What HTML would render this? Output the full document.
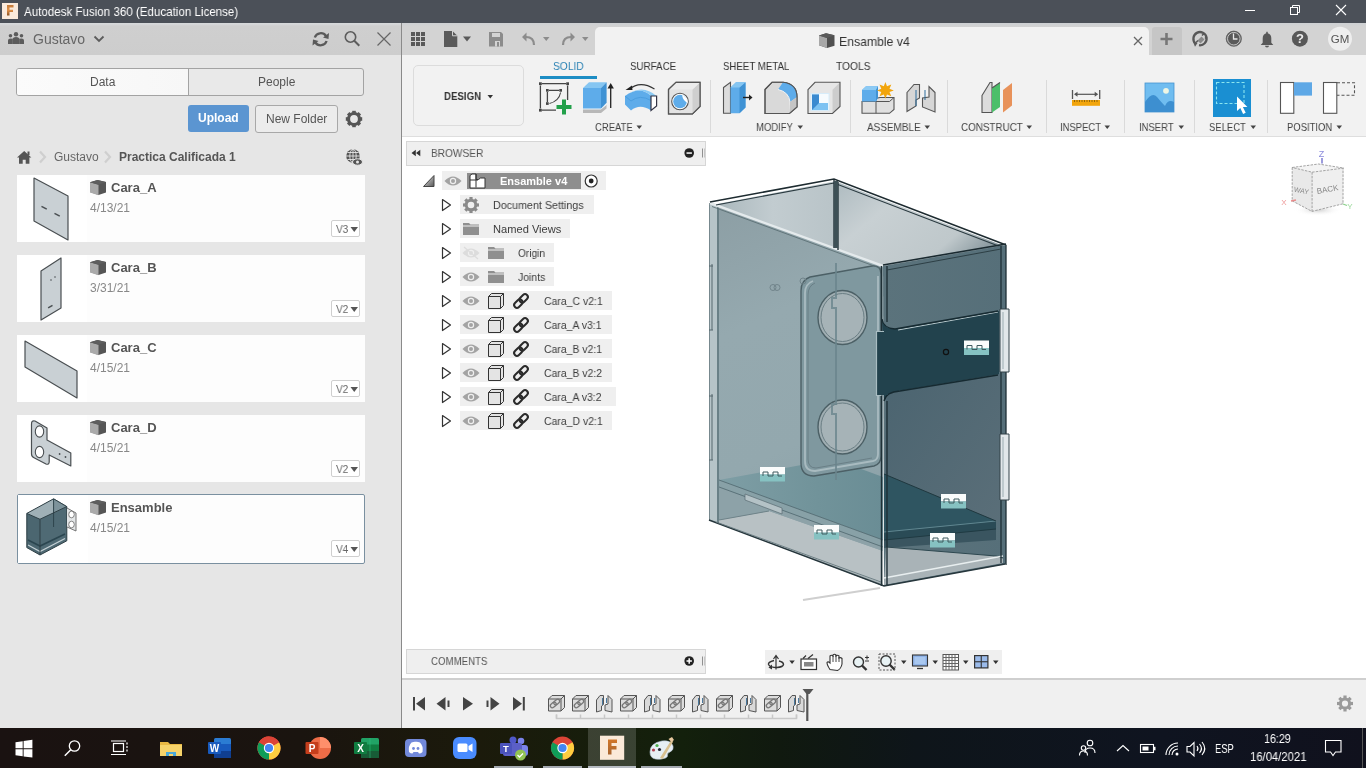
<!DOCTYPE html>
<html><head><meta charset="utf-8">
<style>
*{margin:0;padding:0;box-sizing:border-box}
html,body{width:1366px;height:768px;overflow:hidden;background:#f0f0f0;font-family:"Liberation Sans",sans-serif;position:relative}
.a{position:absolute}
.t{position:absolute;white-space:nowrap;line-height:1;transform-origin:0 0;will-change:transform}
svg{position:absolute;overflow:visible}
#title{left:0;top:0;width:1366px;height:23px;background:#4b5058}
#lp{left:0;top:23px;width:401px;height:705px;background:#e6e6e6}
#lph{left:0;top:23px;width:401px;height:32px;background:linear-gradient(#d6d8da 0,#d6d8da 1px,#cfcfcf 3px,#cdcdcd 100%)}
#div{left:401px;top:23px;width:1px;height:705px;background:#8a8a8a}
#tabbar{left:402px;top:23px;width:964px;height:32px;background:linear-gradient(#cdd0d3 0,#d3d3d3 4px,#d3d3d3)}
#tab{left:595px;top:27px;width:554px;height:28px;background:#f2f2f2;border-radius:5px 5px 0 0}
#plusbg{left:1152px;top:27px;width:30px;height:28px;background:#c6c6c6;border-radius:3px 3px 0 0}
#tb{left:402px;top:55px;width:964px;height:82px;background:#f2f2f2;border-bottom:1px solid #dedede}
#vp{left:402px;top:137px;width:964px;height:542px;background:#fff}
#tl{left:402px;top:678px;width:964px;height:50px;background:#f0f0f0;border-top:2px solid #cfcfcf}
#task{left:0;top:728px;width:1366px;height:40px;background:linear-gradient(90deg,#1a1211 0,#1a140f 22%,#1b1a0b 35%,#13200c 50%,#10190f 57%,#0e151a 67%,#0f1420 85%,#10111d 100%)}
.card{position:absolute;left:17px;width:348px;height:67px;background:#fdfdfd}
.cname{font-size:13px;font-weight:bold;color:#555}
.cdate{font-size:12px;color:#888}
.ver{position:absolute;left:331px;width:29px;height:17px;border:1px solid #cfcfcf;background:#fff;border-radius:2px}
.tbl{font-size:11px;color:#444;transform:scaleX(.86)}
.sep{position:absolute;top:80px;width:1px;height:53px;background:#dadada}
.row{position:absolute;height:19px;background:#efefef}
.tl{font-size:11px;color:#3c3c3c}
</style></head><body>
<!-- title bar -->
<div id="title" class="a"></div>
<div class="a" style="left:2px;top:3px;width:16px;height:16px;background:#fbeadb"></div>
<svg style="left:0;top:0" width="24" height="23"><defs><linearGradient id="tfg" x1="0" y1="0" x2="0" y2="1"><stop offset="0" stop-color="#c47a3a"/><stop offset=".5" stop-color="#e09048"/><stop offset="1" stop-color="#8a5020"/></linearGradient></defs><path d="M7 5h6.5v2.5H9.5v2.2h3.5v2.3H9.5v3.6H7z" fill="url(#tfg)"/></svg>
<div class="t" style="left:24px;top:5px;font-size:13px;color:#fff;transform:scaleX(.89)">Autodesk Fusion 360 (Education License)</div>
<svg style="left:0;top:0" width="1366" height="23">
 <line x1="1245" y1="10.5" x2="1255" y2="10.5" stroke="#fff" stroke-width="1"/>
 <rect x="1290.5" y="7.5" width="7" height="7" fill="none" stroke="#fff"/>
 <path d="M1292.5 7.5V5.5h7v7h-2" fill="none" stroke="#fff"/>
 <path d="M1336 5L1346 15M1346 5L1336 15" stroke="#fff" stroke-width="1.1"/>
</svg>

<!-- left panel -->
<div id="lp" class="a"></div>
<div id="lph" class="a"></div>
<div id="div" class="a"></div>

<!-- left header -->
<svg style="left:0;top:23px" width="401" height="31">
 <g fill="#5c5c5c">
  <circle cx="16" cy="11.2" r="2.2"/><circle cx="10.5" cy="12.8" r="1.8"/><circle cx="21.5" cy="12.8" r="1.8"/>
  <path d="M12.5 21v-4.5q0-2.5 3.5-2.5t3.5 2.5V21z"/>
  <path d="M8 21v-3.5q0-2 2.5-2t2.2 .3V21z"/><path d="M24 21v-3.5q0-2-2.5-2t-2.2 .3V21z"/>
 </g>
 <path d="M94.5 13.5l4.5 4.5l4.5-4.5" fill="none" stroke="#5c5c5c" stroke-width="1.8"/>
 <path d="M314.8 14.5A6.3 6.3 0 0 1 326 13" fill="none" stroke="#5a5a5a" stroke-width="2.3"/>
 <path d="M326.6 18A6.3 6.3 0 0 1 315.4 19.5" fill="none" stroke="#5a5a5a" stroke-width="2.3"/>
 <path d="M323 14.5l5.5 1.5l.5-6z M318.5 18l-5.5-1.5l-.5 6z" fill="#5a5a5a"/>
 <circle cx="350.5" cy="14" r="5.2" fill="none" stroke="#5c5c5c" stroke-width="1.6"/>
 <path d="M354.3 17.8l5 5" stroke="#5c5c5c" stroke-width="2"/>
 <path d="M377.5 9.5l13 13M390.5 9.5l-13 13" stroke="#666" stroke-width="1.2"/>
</svg>
<div class="t" style="left:33px;top:32px;font-size:14px;color:#666">Gustavo</div>

<!-- data/people -->
<div class="a" style="left:16px;top:68px;width:348px;height:28px;border:1px solid #a3a3a3;border-radius:3px;background:#e9e9e9;overflow:hidden">
 <div class="a" style="left:0;top:0;width:172px;height:26px;background:linear-gradient(90deg,#fbfbfb,#f7f7f7);border-right:1px solid #a3a3a3"></div>
</div>
<div class="t" style="left:90px;top:76px;font-size:12px;color:#555">Data</div>
<div class="t" style="left:258px;top:76px;font-size:12px;color:#555">People</div>

<div class="a" style="left:188px;top:105px;width:61px;height:27px;background:#5b95d1;border-radius:3px"></div>
<div class="t" style="left:198px;top:112px;font-size:12px;font-weight:bold;color:#fff">Upload</div>
<div class="a" style="left:255px;top:105px;width:83px;height:28px;border:1px solid #a8a8a8;border-radius:3px;background:#ececec"></div>
<div class="t" style="left:266px;top:113px;font-size:12px;color:#555">New Folder</div>
<svg style="left:0;top:0" width="401" height="200">
 <g transform="translate(354,119)">
  <circle r="5.5" fill="none" stroke="#555" stroke-width="3.2"/>
  <g fill="#555"><rect x="-1.8" y="-8.2" width="3.6" height="3.5"/><rect x="-1.8" y="4.7" width="3.6" height="3.5"/><rect x="-8.2" y="-1.8" width="3.5" height="3.6"/><rect x="4.7" y="-1.8" width="3.5" height="3.6"/>
  <g transform="rotate(45)"><rect x="-1.8" y="-8.2" width="3.6" height="3.5"/><rect x="-1.8" y="4.7" width="3.6" height="3.5"/><rect x="-8.2" y="-1.8" width="3.5" height="3.6"/><rect x="4.7" y="-1.8" width="3.5" height="3.6"/></g></g>
 </g>
 <!-- home -->
 <path d="M17 157.5l7.2-6.5l7.2 6.5h-2v6.3h-3.7v-4h-3v4h-3.7v-6.3z" fill="#555"/>
 <rect x="27.5" y="151.5" width="2" height="3.5" fill="#555"/>
 <path d="M40 151.5l5 5.5l-5 5.5M105 151.5l5 5.5l-5 5.5" fill="none" stroke="#cfcfcf" stroke-width="2.2"/>
 <!-- globe -->
 <circle cx="353" cy="156" r="6.8" fill="#555"/>
 <g stroke="#e6e6e6" stroke-width=".9" fill="none"><path d="M346 156h14M353 149v14M347.5 152.5h11M347.5 159.5h11"/><ellipse cx="353" cy="156" rx="3.2" ry="6.8"/></g>
 <ellipse cx="357.5" cy="162" rx="5" ry="3.2" fill="#555" stroke="#e6e6e6" stroke-width="1"/>
 <circle cx="357.5" cy="162" r="1.5" fill="#e6e6e6"/>
</svg>
<div class="t" style="left:54px;top:151px;font-size:12px;color:#666">Gustavo</div>
<div class="t" style="left:119px;top:151px;font-size:12px;font-weight:bold;color:#555">Practica Calificada 1</div>
<div class="card" style="top:175px;"><div class="a" style="left:0;top:0;width:70px;height:100%;background:#fff"></div></div>
<div class="t cname" style="left:111px;top:181px">Cara_A</div>
<div class="t cdate" style="left:90px;top:202px">4/13/21</div>
<div class="ver" style="top:220px"></div><div class="t" style="left:336px;top:224px;font-size:11px;color:#666;transform:scaleX(.92)">V3</div>
<svg style="left:0;top:0" width="1" height="1"><path d="M350.5 227h7.5l-3.75 5z" fill="#555"/><path d="M90 182.2l7.5-2.3l8.5 2v10.5l-7.5 2.5l-8.5-2.8z" fill="#555"/><path d="M90 182.2l8.5 2.6v10.5l-8.5-2.8z" fill="#aaa"/><path d="M90 182.2l7.5-2.3l8.5 2l-7.5 2.9z" fill="#5e5e5e"/></svg>
<div class="card" style="top:255px;"><div class="a" style="left:0;top:0;width:70px;height:100%;background:#fff"></div></div>
<div class="t cname" style="left:111px;top:261px">Cara_B</div>
<div class="t cdate" style="left:90px;top:282px">3/31/21</div>
<div class="ver" style="top:300px"></div><div class="t" style="left:336px;top:304px;font-size:11px;color:#666;transform:scaleX(.92)">V2</div>
<svg style="left:0;top:0" width="1" height="1"><path d="M350.5 307h7.5l-3.75 5z" fill="#555"/><path d="M90 262.2l7.5-2.3l8.5 2v10.5l-7.5 2.5l-8.5-2.8z" fill="#555"/><path d="M90 262.2l8.5 2.6v10.5l-8.5-2.8z" fill="#aaa"/><path d="M90 262.2l7.5-2.3l8.5 2l-7.5 2.9z" fill="#5e5e5e"/></svg>
<div class="card" style="top:335px;"><div class="a" style="left:0;top:0;width:70px;height:100%;background:#fff"></div></div>
<div class="t cname" style="left:111px;top:341px">Cara_C</div>
<div class="t cdate" style="left:90px;top:362px">4/15/21</div>
<div class="ver" style="top:380px"></div><div class="t" style="left:336px;top:384px;font-size:11px;color:#666;transform:scaleX(.92)">V2</div>
<svg style="left:0;top:0" width="1" height="1"><path d="M350.5 387h7.5l-3.75 5z" fill="#555"/><path d="M90 342.2l7.5-2.3l8.5 2v10.5l-7.5 2.5l-8.5-2.8z" fill="#555"/><path d="M90 342.2l8.5 2.6v10.5l-8.5-2.8z" fill="#aaa"/><path d="M90 342.2l7.5-2.3l8.5 2l-7.5 2.9z" fill="#5e5e5e"/></svg>
<div class="card" style="top:415px;"><div class="a" style="left:0;top:0;width:70px;height:100%;background:#fff"></div></div>
<div class="t cname" style="left:111px;top:421px">Cara_D</div>
<div class="t cdate" style="left:90px;top:442px">4/15/21</div>
<div class="ver" style="top:460px"></div><div class="t" style="left:336px;top:464px;font-size:11px;color:#666;transform:scaleX(.92)">V2</div>
<svg style="left:0;top:0" width="1" height="1"><path d="M350.5 467h7.5l-3.75 5z" fill="#555"/><path d="M90 422.2l7.5-2.3l8.5 2v10.5l-7.5 2.5l-8.5-2.8z" fill="#555"/><path d="M90 422.2l8.5 2.6v10.5l-8.5-2.8z" fill="#aaa"/><path d="M90 422.2l7.5-2.3l8.5 2l-7.5 2.9z" fill="#5e5e5e"/></svg>
<div class="card" style="top:494px;height:70px;border:1px solid #7a90a0;border-radius:2px;"><div class="a" style="left:0;top:0;width:70px;height:100%;background:#fff"></div></div>
<div class="t cname" style="left:111px;top:501px">Ensamble</div>
<div class="t cdate" style="left:90px;top:522px">4/15/21</div>
<div class="ver" style="top:540px"></div><div class="t" style="left:336px;top:544px;font-size:11px;color:#666;transform:scaleX(.92)">V4</div>
<svg style="left:0;top:0" width="1" height="1"><path d="M350.5 547h7.5l-3.75 5z" fill="#555"/><path d="M90 502.2l7.5-2.3l8.5 2v10.5l-7.5 2.5l-8.5-2.8z" fill="#555"/><path d="M90 502.2l8.5 2.6v10.5l-8.5-2.8z" fill="#aaa"/><path d="M90 502.2l7.5-2.3l8.5 2l-7.5 2.9z" fill="#5e5e5e"/></svg>

<svg style="left:0;top:0" width="401" height="600">
 <g stroke="#4a4f52" stroke-width="1.2" fill="#c9d0d4" stroke-linejoin="round">
  <path d="M34 178L68 196V240L34 221Z"/>
  <path d="M61 258V308L41 320V271Z"/>
  <path d="M25 341L77 371V398L25 367Z"/>
  <path d="M31.5 424Q31.5 420 35 421L47 428V440L70.8 453V466L49.2 455V462Q49 465 46 464L34.5 458Q31.5 457 31.5 454Z"/>
 </g>
 <g fill="#4a4f52"><rect x="41" y="207" width="6" height="1.5" transform="rotate(28 44 208)"/><rect x="54" y="214" width="6" height="1.5" transform="rotate(28 57 215)"/>
 <rect x="48" y="306" width="5" height="1.5" transform="rotate(-30 50 307)"/><circle cx="51" cy="280" r=".8"/><circle cx="55" cy="277" r=".8"/>
 <circle cx="59.6" cy="454" r=".9"/><circle cx="65.5" cy="457" r=".9"/></g>
 <g fill="#fff" stroke="#4a4f52" stroke-width="1.1"><ellipse cx="39.5" cy="431.5" rx="4.2" ry="5.6"/><ellipse cx="39.5" cy="452" rx="4.2" ry="5.6"/></g>
 <!-- ensamble -->
 <path d="M26.8 513.4L53.6 498.8L66.8 506.6L40 519.3Z" fill="#b3c0c4"/>
 <path d="M53.6 498.8L66.8 506.6V525L53.6 520Z" fill="#7d939b"/>
 <path d="M26.8 513.4L53.6 498.8V520L26.8 535Z" fill="#9fb0b6"/>
 <path d="M26.8 513.4L40 519.3V555L26.8 547.6Z" fill="#4b6670"/>
 <path d="M40 519.3L66.8 506.6V540.8L40 555Z" fill="#4f6a74"/>
 <path d="M40 519.3L66.8 506.6L53.6 498.8" fill="none" stroke="#6e8790" stroke-width=".8"/>
 <path d="M53.6 499V527" stroke="#2e444c" stroke-width="1"/>
 <path d="M28 540L40 546L65 534" fill="none" stroke="#2b4650" stroke-width="1.6"/>
 <path d="M28 545L40 551.5L65 538.5" fill="none" stroke="#c4d0d4" stroke-width="1.3"/>
 <path d="M26.8 513.4L53.6 498.8L66.8 506.6V540.8L40 555L26.8 547.6Z M40 519.3V555 M26.8 513.4L40 519.3L66.8 506.6" fill="none" stroke="#2e3f45" stroke-width="1"/>
 <path d="M67 508L76 513V531L67 527" fill="#e3e6e7" stroke="#666" stroke-width=".9"/>
 <g fill="#fff" stroke="#666" stroke-width=".8"><ellipse cx="71.5" cy="514.5" rx="2.8" ry="3.3"/><ellipse cx="71.5" cy="524.5" rx="2.8" ry="3.3"/></g>
</svg>

<!-- tab bar -->
<div id="tabbar" class="a"></div>
<div id="tab" class="a"></div>
<div id="plusbg" class="a"></div>
<svg style="left:0;top:0" width="1366" height="60">
 <g fill="#5a5a5a">
  <rect x="411" y="32" width="4" height="4"/><rect x="416" y="32" width="4" height="4"/><rect x="421" y="32" width="4" height="4"/>
  <rect x="411" y="37" width="4" height="4"/><rect x="416" y="37" width="4" height="4"/><rect x="421" y="37" width="4" height="4"/>
  <rect x="411" y="42" width="4" height="4"/><rect x="416" y="42" width="4" height="4"/><rect x="421" y="42" width="4" height="4"/>
  <path d="M444 31h8.5l4.8 4.8V47H444z"/>
  <path d="M463 36.5h8l-4 5z"/>
 </g>
 <path d="M452.5 31v4.8h4.8" fill="none" stroke="#d3d3d3" stroke-width="1"/>
 <g fill="#8c8c8c">
  <path d="M489 32h12l2 2v12.5h-14z"/>
  <path d="M543 37h6.5l-3.25 4z M582 37h6.5l-3.25 4z"/>
 </g>
 <rect x="492" y="33" width="8" height="4" fill="#d3d3d3"/><rect x="495" y="41" width="5" height="5.5" fill="#d3d3d3"/>
 <rect x="497" y="42" width="2" height="4.5" fill="#8c8c8c"/>
 <g fill="none" stroke="#8c8c8c" stroke-width="2.2">
  <path d="M534 45q0-8-8-8h-3"/><path d="M563 45q0-8 8-8h3"/>
 </g>
 <path d="M522 37l4.5-4.5v9z M575 37l-4.5-4.5v9z" fill="#8c8c8c"/>
 <!-- tab cube + close -->
 <path d="M819 35.5l7-2.3l8.5 2v10.5l-7.5 2.3l-8-2.8z" fill="#505050"/><path d="M819 35.5l8 2.5v10l-8-2.8z" fill="#a8a8a8"/><path d="M819 35.5l7-2.3l8.5 2l-7.5 2.8z" fill="#5a5a5a"/>
 <path d="M1134 37l8 8M1142 37l-8 8" stroke="#666" stroke-width="1.3"/>
 <path d="M1166.5 33v12M1160.5 39h12" stroke="#777" stroke-width="2.6"/>
 <!-- right icons -->
 <g fill="#585858">
  <path d="M1195.5 43.5A6.6 6.6 0 1 1 1199 45.2" fill="none" stroke="#585858" stroke-width="2.3"/>
 <path d="M1193 41.5l4.5 1.5l-2.5 3.8z" fill="#585858"/>
 <path d="M1197.5 40.5l4-4l3 3l-4 4z" fill="#8a8a8a"/>
 <path d="M1202 35.5l1.8-1.8M1205 38.5l1.8-1.8" stroke="#585858" stroke-width="1.6"/>
 <path d="M1196 42.5l2-2" stroke="#585858" stroke-width="1.6"/>
 <circle cx="1233.8" cy="38.7" r="7.6" fill="#5a5a5a" stroke="#5a5a5a" stroke-width=".8"/>
 <circle cx="1233.8" cy="38.7" r="6.3" fill="none" stroke="#d3d3d3" stroke-width=".9"/>
 <path d="M1233.5 33.5v5.5h4" fill="none" stroke="#e8e8e8" stroke-width="1.3"/>
 <path d="M1267 31.5q-.8 0-.8 1v.8q-3.5 1-3.5 5v4.5l-2 2.2h12.6l-2-2.2v-4.5q0-4-3.5-5v-.8q0-1-.8-1z M1265 45.8h4q0 1.6-2 1.6t-2-1.6z" fill="#585858"/>
 <circle cx="1299.9" cy="38.7" r="8" fill="#585858"/>
 <text x="1299.9" y="43.3" font-family="Liberation Sans" font-size="13" font-weight="bold" fill="#ececec" text-anchor="middle">?</text>
 <circle cx="1340" cy="38.7" r="12" fill="#eeeeee"/>
 <text x="1340" y="42.8" font-family="Liberation Sans" font-size="11.5" fill="#555" text-anchor="middle">GM</text>
</svg>
<div class="t" style="left:839px;top:35px;font-size:13px;color:#333;transform:scaleX(.94)">Ensamble v4</div>

<!-- toolbar -->
<div id="tb" class="a"></div>
<div class="a" style="left:413px;top:65px;width:111px;height:61px;border:1px solid #dcdcdc;border-radius:5px;background:#f2f2f2"></div>
<div class="t" style="left:444px;top:91px;font-size:11px;font-weight:bold;color:#333;transform:scaleX(.88)">DESIGN</div>
<svg style="left:0;top:0" width="1" height="1"><path d="M487.5 95h5.5l-2.75 3.5z" fill="#333"/></svg>
<div class="t" style="left:553px;top:61px;font-size:11px;color:#2a82b4;transform:scaleX(.93)">SOLID</div>
<div class="a" style="left:540px;top:76px;width:57px;height:3px;background:#1d8dc4"></div>
<div class="t" style="left:630px;top:61px;font-size:11px;color:#333;transform:scaleX(.89)">SURFACE</div>
<div class="t" style="left:723px;top:61px;font-size:11px;color:#333;transform:scaleX(.88)">SHEET METAL</div>
<div class="t" style="left:836px;top:61px;font-size:11px;color:#333;transform:scaleX(.93)">TOOLS</div>
<div class="t tbl" style="left:595px;top:122px">CREATE</div>
<div class="t tbl" style="left:756px;top:122px">MODIFY</div>
<div class="t tbl" style="left:867px;top:122px;transform:scaleX(.905)">ASSEMBLE</div>
<div class="t tbl" style="left:961px;top:122px;transform:scaleX(.895)">CONSTRUCT</div>
<div class="t tbl" style="left:1060px;top:122px">INSPECT</div>
<div class="t tbl" style="left:1139px;top:122px">INSERT</div>
<div class="t tbl" style="left:1208.5px;top:122px">SELECT</div>
<div class="t tbl" style="left:1287px;top:122px">POSITION</div>
<svg style="left:0;top:0" width="1" height="1"><g fill="#444"><path d="M636.5 125.5h5.5l-2.75 3.5z"/><path d="M797.5 125.5h5.5l-2.75 3.5z"/><path d="M924.5 125.5h5.5l-2.75 3.5z"/><path d="M1026.5 125.5h5.5l-2.75 3.5z"/><path d="M1104.5 125.5h5.5l-2.75 3.5z"/><path d="M1178.5 125.5h5.5l-2.75 3.5z"/><path d="M1250.5 125.5h5.5l-2.75 3.5z"/><path d="M1336.5 125.5h5.5l-2.75 3.5z"/></g></svg>
<div class="sep" style="left:710px"></div><div class="sep" style="left:850px"></div><div class="sep" style="left:947px"></div><div class="sep" style="left:1046px"></div><div class="sep" style="left:1124px"></div><div class="sep" style="left:1194px"></div><div class="sep" style="left:1267px"></div>
<svg style="left:0;top:0" width="1366" height="140">
 <!-- sketch -->
 <g stroke="#454545" stroke-width="1.3" fill="none">
  <path d="M542 83.6H566M540.4 85.5V108.5M542 110.2H556M567.6 85.5V100"/>
  <path d="M549 90.3H559M547.4 92V102"/>
  <path d="M560.6 92.5Q559 101 549.5 103.5" stroke-width="1.1"/>
 </g>
 <g fill="#454545"><rect x="539" y="82.3" width="2.8" height="2.8"/><rect x="566.2" y="82.3" width="2.8" height="2.8"/><rect x="539" y="108.8" width="2.8" height="2.8"/>
 <rect x="546" y="89" width="2.7" height="2.7"/><rect x="559.3" y="89" width="2.7" height="2.7"/><rect x="546" y="102.2" width="2.7" height="2.7"/></g>
 <path d="M562 99.5h4v5.5h5.5v4h-5.5v5.5h-4v-5.5h-5.5v-4h5.5z" fill="#22a04a"/>
 <!-- extrude -->
 <path d="M583 109h18l5.5-4.5v4l-5.5 4.5h-18z" fill="#b8b8b8"/>
 <path d="M583 109h18l5.5-4.5" fill="none" stroke="#e8f4fc" stroke-width="1"/>
 <path d="M583 88l6-5.8h17.6l-5.6 5.8z" fill="#86c6f2"/>
 <rect x="583" y="88" width="18" height="20.5" fill="#5eacea"/>
 <path d="M601 88l5.6-5.8v20.5l-5.6 5.8z" fill="#3f92d4"/>
 <path d="M610.7 108V86" stroke="#222" stroke-width="1.3"/><path d="M607.5 88.5l3.2-5.5l3.2 5.5z" fill="#222"/>
 <!-- revolve -->
 <path d="M629 89.5Q640 80 654.5 89" fill="none" stroke="#333" stroke-width="1.1"/>
 <path d="M625.5 90l6.5-4.5l.5 4.5z" fill="#222"/>
 <path d="M625 96Q640 85 651 96V110.5Q640 103 631 110.5L625 104.5z" fill="#5eacea"/>
 <path d="M625 96Q640 85 651 96l5.5 0Q642 83 625 96z" fill="#8ccaf4"/>
 <path d="M625 96L631 101Q640 94 651 100.5" fill="none" stroke="#4a9ee0" stroke-width="1"/>
 <path d="M651 96h5.6V106l-5.6 4.5z" fill="#fff" stroke="#334" stroke-width="1.2"/>
 <!-- hole -->
 <path d="M668.5 89.5L676 82.3H700V106.5L692.5 114H668.5Z" fill="#e3e3e3" stroke="#555" stroke-width="1.2"/>
 <path d="M692.5 89.5L700 82.3V106.5L692.5 114Z" fill="#cfcfcf"/>
 <path d="M668.5 89.5L676 82.3H700L692.5 89.5Z" fill="#ececec"/>
 <path d="M668.5 89.5L676 82.3H700V106.5L692.5 114H668.5Z" fill="none" stroke="#555" stroke-width="1.2"/>
 <circle cx="680" cy="101.5" r="8.3" fill="#fff" stroke="#555" stroke-width="1.1"/>
 <circle cx="680" cy="101.5" r="6.8" fill="#5eacea"/>
 <path d="M682 95Q683 101 688 103Q687 97 682 95z" fill="#fff"/>
 <!-- press pull -->
 <path d="M723.5 87.5L730.5 82.3V113.3H723.5Z" fill="#dcdcdc" stroke="#555" stroke-width="1.1"/>
 <path d="M730.5 87.5L736 82.3H745.5V107.5L739.5 113.3H730.5Z" fill="#5eacea"/>
 <path d="M739.5 87.5L745.5 82.3V107.5L739.5 113.3Z" fill="#3f92d4"/>
 <path d="M730.5 87.5L736 82.3H745.5L739.5 87.5Z" fill="#86c6f2"/>
 <path d="M743 97.5H750" stroke="#222" stroke-width="1.4"/><path d="M749 94.5l3.5 3l-3.5 3z" fill="#222"/>
 <!-- fillet -->
 <path d="M765 89.5L772 82.3H783Q797 84 797 97V107L789.5 113.5H765Z" fill="#d9d9d9" stroke="#555" stroke-width="1.1"/>
 <path d="M783 82.3Q797 84 797 97L790 102Q789 92 778 89.5Z" fill="#5eacea"/>
 <path d="M778 89.5Q789 92 790 102V113.5" fill="none" stroke="#f4f4f4" stroke-width="1"/>
 <path d="M790 102L797 97V107L789.5 113.5Z" fill="#c5c5c5"/>
 <path d="M765 89.5L772 82.3H783Q797 84 797 97V107L789.5 113.5H765Z" fill="none" stroke="#555" stroke-width="1.1"/>
 <!-- shell -->
 <path d="M808 89.7L815 82.3H840V106.5L832.5 113.5H808Z" fill="#e6e6e6"/>
 <path d="M832.5 89.7L840 82.3V106.5L832.5 113.5Z" fill="#cdcdcd"/>
 <path d="M808 89.7L815 82.3H840V106.5L832.5 113.5H808Z" fill="none" stroke="#555" stroke-width="1.1"/>
 <rect x="811" y="93.5" width="18" height="17" fill="#f6fbfe" stroke="#d6ecfa" stroke-width="1"/>
 <path d="M812 94.5h7v8.5h9v7h-16z" fill="#7cc2f2"/>
 <path d="M812 94.5h7v8.5l-7 7z" fill="#3a8ad0"/>
 <!-- new component -->
 <path d="M862 101.5V113.3H889.5L894 109.5V97.5H880Z" fill="#e0e0e0" stroke="#555" stroke-width="1.1"/>
 <path d="M876 101.5V113.3M862 101.5H889.5L894 97.5" fill="none" stroke="#555" stroke-width="1"/>
 <path d="M862 90L866 86.2H878V97.5L876 101.5H862Z" fill="#5eacea"/>
 <path d="M862 90L866 86.2H878L876 90Z" fill="#8ccaf4"/><path d="M876 90L878 86.2V97.5L876 101.5Z" fill="#3f92d4"/>
 <path d="M885.4 82l1.6 4.3l4.3-1.8l-1.8 4.3l4.3 1.6l-4.3 1.6l1.8 4.3l-4.3-1.8l-1.6 4.3l-1.6-4.3l-4.3 1.8l1.8-4.3l-4.3-1.6l4.3-1.6l-1.8-4.3l4.3 1.8z" fill="#f2a50c"/>
 <!-- joint -->
 <path d="M907 92.5L914 84.5H919.5V98L916 100V106L907 111.5Z" fill="#d6d6d6" stroke="#555" stroke-width="1.1"/>
 <path d="M935 92.5L929 86.5V97L922.5 98V107L935 112Z" fill="#d6d6d6" stroke="#555" stroke-width="1.1"/>
 <path d="M916 90V106M925 90V100" stroke="#2c6c9c" stroke-width="1"/>
 <!-- construct -->
 <path d="M982 95.5L990 82.5H992V112.5H982Z" fill="#dcdcdc" stroke="#555" stroke-width="1.1"/>
 <path d="M992 88L1000 82.5V107L992 112.5Z" fill="#4cbf6a"/>
 <path d="M992 88L1000 82.5" stroke="#555" stroke-width="1.1"/>
 <path d="M1003 90L1012 83V105.5L1003 112.5Z" fill="#e8925a"/>
 <!-- inspect -->
 <path d="M1072.5 90V99M1099.7 90V99" stroke="#555" stroke-width="1.3"/>
 <path d="M1075 94.3H1097" stroke="#555" stroke-width="1.2"/>
 <path d="M1074 94.3l3.5-2.5v5z M1098.2 94.3l-3.5-2.5v5z" fill="#555"/>
 <rect x="1072" y="100" width="28" height="5.8" fill="#f2a50c"/>
 <path d="M1074.5 100v2M1077 100v2M1079.5 100v2M1082 100v2M1084.5 100v2M1087 100v2M1089.5 100v2M1092 100v2M1094.5 100v2M1097 100v2" stroke="#6a4a08" stroke-width=".7"/>
 <!-- insert -->
 <rect x="1145" y="83" width="29" height="29" fill="#70bdf0" stroke="#4795cf" stroke-width=".8"/>
 <path d="M1145 102Q1152 91 1157 97Q1162 103 1165 106Q1168 99 1174 102V112H1145Z" fill="#3d8fd0"/>
 <circle cx="1166" cy="90.8" r="2.9" fill="#eef6e4"/>
 <!-- select -->
 <rect x="1213" y="79" width="38" height="38" fill="#1a8fd2"/>
 <rect x="1216.5" y="82.5" width="27.5" height="21" fill="none" stroke="#8ae6f0" stroke-width="1.1" stroke-dasharray="3 2"/>
 <path d="M1237 96.5V111l3.3-3l2.8 6l2.6-1.2l-2.8-5.8h4.5z" fill="#fff"/>
 <!-- position -->
 <rect x="1280.5" y="82.5" width="13.3" height="30.8" fill="#fff" stroke="#555" stroke-width="1.1"/>
 <rect x="1294" y="82.3" width="18" height="13.3" fill="#5ea8e6"/>
 <rect x="1323.5" y="82.5" width="13.3" height="30.8" fill="#fff" stroke="#555" stroke-width="1.1"/>
 <path d="M1337 82.8H1354.5V95.3H1337" fill="none" stroke="#555" stroke-width="1.1" stroke-dasharray="3 2"/>
</svg>

<div id="vp" class="a"></div>
<!-- browser -->
<div class="a" style="left:406px;top:141px;width:300px;height:25px;background:#efefef;border:1px solid #d6d6d6"></div>
<div class="t" style="left:431px;top:148px;font-size:11px;color:#555;transform:scaleX(.92)">BROWSER</div>
<svg style="left:0;top:0" width="1366" height="768">
 <path d="M411.5 153l4.3-3.3v6.6z M416 153l4.3-3.3v6.6z" fill="#333"/>
 <circle cx="689.2" cy="153" r="4.8" fill="#222"/><rect x="686.5" y="152.3" width="5.4" height="1.5" fill="#fff"/>
 <path d="M702.5 148.5v9" stroke="#777" stroke-width=".8"/><path d="M704.5 148.5v9" stroke="#bbb" stroke-width=".8"/>
 
</svg>
<div class="row" style="left:442px;top:171px;width:164px"></div>
<div class="a" style="left:467px;top:173px;width:114px;height:16px;background:#8e8e8e"></div>
<div class="t" style="left:500px;top:175.6px;font-size:11px;font-weight:bold;color:#fff">Ensamble v4</div>
<div class="row" style="left:460px;top:195px;width:134px"></div>
<div class="t tl" style="left:493px;top:199.6px;transform:scaleX(.975)">Document Settings</div>
<div class="row" style="left:460px;top:219px;width:110px"></div>
<div class="t tl" style="left:493px;top:223.6px;transform:scaleX(1.01)">Named Views</div>
<div class="row" style="left:460px;top:243px;width:94px"></div>
<div class="t tl" style="left:518px;top:247.6px;transform:scaleX(.92)">Origin</div>
<div class="row" style="left:460px;top:267px;width:94px"></div>
<div class="t tl" style="left:518px;top:271.6px;transform:scaleX(.95)">Joints</div>
<div class="row" style="left:460px;top:291px;width:152px"></div>
<div class="t tl" style="left:544px;top:295.6px;transform:scaleX(.95)">Cara_C v2:1</div>
<div class="row" style="left:460px;top:315px;width:152px"></div>
<div class="t tl" style="left:544px;top:319.6px;transform:scaleX(.95)">Cara_A v3:1</div>
<div class="row" style="left:460px;top:339px;width:152px"></div>
<div class="t tl" style="left:544px;top:343.6px;transform:scaleX(.95)">Cara_B v2:1</div>
<div class="row" style="left:460px;top:363px;width:152px"></div>
<div class="t tl" style="left:544px;top:367.6px;transform:scaleX(.95)">Cara_B v2:2</div>
<div class="row" style="left:460px;top:387px;width:156px"></div>
<div class="t tl" style="left:544px;top:391.6px;transform:scaleX(.95)">Cara_A v3:2</div>
<div class="row" style="left:460px;top:411px;width:152px"></div>
<div class="t tl" style="left:544px;top:415.6px;transform:scaleX(.95)">Cara_D v2:1</div>
<svg style="left:0;top:0" width="1366" height="768"><defs><linearGradient id="tg" x1="0" y1="0" x2="1" y2="1"><stop offset="0" stop-color="#eee"/><stop offset="1" stop-color="#555"/></linearGradient></defs><path d="M423.5 186.5L434 175.5V186.5Z" fill="url(#tg)" stroke="#444" stroke-width="1"/><path d="M444.5 181.0Q453.0 172.0 461.5 181.0Q453.0 190.0 444.5 181.0z" fill="#a3a3a3"/><circle cx="453.0" cy="181.0" r="3.2" fill="#efefef"/><circle cx="453.0" cy="181.0" r="2" fill="#a3a3a3"/><g stroke="#333" stroke-width="1" fill="#fff"><path d="M470 175.5l2-1.5h4v5.5h2.5l2-1.5h4.5v10h-15z"/><path d="M476 174v13.5M470 180h8"/></g><circle cx="591.2" cy="181" r="6" fill="#fff" stroke="#333" stroke-width="1.2"/><circle cx="591.2" cy="181" r="2.4" fill="#222"/><path d="M442.5 199.5L450.5 205L442.5 210.5Z" fill="#fff" stroke="#333" stroke-width="1.2" stroke-linejoin="round"/><g transform="translate(471,205)"><circle r="4.8" fill="none" stroke="#8a8a8a" stroke-width="3"/><g fill="#8a8a8a"><rect x="-1.6" y="-8" width="3.2" height="3.5" transform="rotate(0)"/><rect x="-1.6" y="-8" width="3.2" height="3.5" transform="rotate(45)"/><rect x="-1.6" y="-8" width="3.2" height="3.5" transform="rotate(90)"/><rect x="-1.6" y="-8" width="3.2" height="3.5" transform="rotate(135)"/><rect x="-1.6" y="-8" width="3.2" height="3.5" transform="rotate(180)"/><rect x="-1.6" y="-8" width="3.2" height="3.5" transform="rotate(225)"/><rect x="-1.6" y="-8" width="3.2" height="3.5" transform="rotate(270)"/><rect x="-1.6" y="-8" width="3.2" height="3.5" transform="rotate(315)"/></g></g><path d="M442.5 223.5L450.5 229L442.5 234.5Z" fill="#fff" stroke="#333" stroke-width="1.2" stroke-linejoin="round"/><path d="M463 223h6l1.5 1.5h8.5v10.5h-16z" fill="#8f8f8f"/><rect x="463" y="225.5" width="16" height="1" fill="#efefef"/><path d="M442.5 247.5L450.5 253L442.5 258.5Z" fill="#fff" stroke="#333" stroke-width="1.2" stroke-linejoin="round"/><path d="M462.5 253.0Q471.0 244.0 479.5 253.0Q471.0 262.0 462.5 253.0z" fill="#dcdcdc"/><circle cx="471.0" cy="253.0" r="3.2" fill="#efefef"/><circle cx="471.0" cy="253.0" r="2" fill="#dcdcdc"/><path d="M464 247L478 259" stroke="#dcdcdc" stroke-width="1.2"/><path d="M488 247h6l1.5 1.5h8.5v10.5h-16z" fill="#8f8f8f"/><rect x="488" y="249.5" width="16" height="1" fill="#efefef"/><path d="M442.5 271.5L450.5 277L442.5 282.5Z" fill="#fff" stroke="#333" stroke-width="1.2" stroke-linejoin="round"/><path d="M462.5 277.0Q471.0 268.0 479.5 277.0Q471.0 286.0 462.5 277.0z" fill="#a3a3a3"/><circle cx="471.0" cy="277.0" r="3.2" fill="#efefef"/><circle cx="471.0" cy="277.0" r="2" fill="#a3a3a3"/><path d="M488 271h6l1.5 1.5h8.5v10.5h-16z" fill="#8f8f8f"/><rect x="488" y="273.5" width="16" height="1" fill="#efefef"/><path d="M442.5 295.5L450.5 301L442.5 306.5Z" fill="#fff" stroke="#333" stroke-width="1.2" stroke-linejoin="round"/><path d="M462.5 301.0Q471.0 292.0 479.5 301.0Q471.0 310.0 462.5 301.0z" fill="#a3a3a3"/><circle cx="471.0" cy="301.0" r="3.2" fill="#efefef"/><circle cx="471.0" cy="301.0" r="2" fill="#a3a3a3"/><path d="M488.5 296.5l3-3h12v12l-3 3h-12z" fill="#e4e4e4" stroke="#333" stroke-width="1"/><path d="M488.5 296.5h12v12M500.5 296.5l3-3" fill="none" stroke="#333" stroke-width="1"/><g transform="translate(521,301.0) rotate(-45)" fill="none" stroke="#2a2a2a" stroke-width="2"><rect x="-8.5" y="-2.8" width="9.5" height="5.6" rx="2.8"/><rect x="-1" y="-2.8" width="9.5" height="5.6" rx="2.8"/></g><path d="M442.5 319.5L450.5 325L442.5 330.5Z" fill="#fff" stroke="#333" stroke-width="1.2" stroke-linejoin="round"/><path d="M462.5 325.0Q471.0 316.0 479.5 325.0Q471.0 334.0 462.5 325.0z" fill="#a3a3a3"/><circle cx="471.0" cy="325.0" r="3.2" fill="#efefef"/><circle cx="471.0" cy="325.0" r="2" fill="#a3a3a3"/><path d="M488.5 320.5l3-3h12v12l-3 3h-12z" fill="#e4e4e4" stroke="#333" stroke-width="1"/><path d="M488.5 320.5h12v12M500.5 320.5l3-3" fill="none" stroke="#333" stroke-width="1"/><g transform="translate(521,325.0) rotate(-45)" fill="none" stroke="#2a2a2a" stroke-width="2"><rect x="-8.5" y="-2.8" width="9.5" height="5.6" rx="2.8"/><rect x="-1" y="-2.8" width="9.5" height="5.6" rx="2.8"/></g><path d="M442.5 343.5L450.5 349L442.5 354.5Z" fill="#fff" stroke="#333" stroke-width="1.2" stroke-linejoin="round"/><path d="M462.5 349.0Q471.0 340.0 479.5 349.0Q471.0 358.0 462.5 349.0z" fill="#a3a3a3"/><circle cx="471.0" cy="349.0" r="3.2" fill="#efefef"/><circle cx="471.0" cy="349.0" r="2" fill="#a3a3a3"/><path d="M488.5 344.5l3-3h12v12l-3 3h-12z" fill="#e4e4e4" stroke="#333" stroke-width="1"/><path d="M488.5 344.5h12v12M500.5 344.5l3-3" fill="none" stroke="#333" stroke-width="1"/><g transform="translate(521,349.0) rotate(-45)" fill="none" stroke="#2a2a2a" stroke-width="2"><rect x="-8.5" y="-2.8" width="9.5" height="5.6" rx="2.8"/><rect x="-1" y="-2.8" width="9.5" height="5.6" rx="2.8"/></g><path d="M442.5 367.5L450.5 373L442.5 378.5Z" fill="#fff" stroke="#333" stroke-width="1.2" stroke-linejoin="round"/><path d="M462.5 373.0Q471.0 364.0 479.5 373.0Q471.0 382.0 462.5 373.0z" fill="#a3a3a3"/><circle cx="471.0" cy="373.0" r="3.2" fill="#efefef"/><circle cx="471.0" cy="373.0" r="2" fill="#a3a3a3"/><path d="M488.5 368.5l3-3h12v12l-3 3h-12z" fill="#e4e4e4" stroke="#333" stroke-width="1"/><path d="M488.5 368.5h12v12M500.5 368.5l3-3" fill="none" stroke="#333" stroke-width="1"/><g transform="translate(521,373.0) rotate(-45)" fill="none" stroke="#2a2a2a" stroke-width="2"><rect x="-8.5" y="-2.8" width="9.5" height="5.6" rx="2.8"/><rect x="-1" y="-2.8" width="9.5" height="5.6" rx="2.8"/></g><path d="M442.5 391.5L450.5 397L442.5 402.5Z" fill="#fff" stroke="#333" stroke-width="1.2" stroke-linejoin="round"/><path d="M462.5 397.0Q471.0 388.0 479.5 397.0Q471.0 406.0 462.5 397.0z" fill="#a3a3a3"/><circle cx="471.0" cy="397.0" r="3.2" fill="#efefef"/><circle cx="471.0" cy="397.0" r="2" fill="#a3a3a3"/><path d="M488.5 392.5l3-3h12v12l-3 3h-12z" fill="#e4e4e4" stroke="#333" stroke-width="1"/><path d="M488.5 392.5h12v12M500.5 392.5l3-3" fill="none" stroke="#333" stroke-width="1"/><g transform="translate(521,397.0) rotate(-45)" fill="none" stroke="#2a2a2a" stroke-width="2"><rect x="-8.5" y="-2.8" width="9.5" height="5.6" rx="2.8"/><rect x="-1" y="-2.8" width="9.5" height="5.6" rx="2.8"/></g><path d="M442.5 415.5L450.5 421L442.5 426.5Z" fill="#fff" stroke="#333" stroke-width="1.2" stroke-linejoin="round"/><path d="M462.5 421.0Q471.0 412.0 479.5 421.0Q471.0 430.0 462.5 421.0z" fill="#a3a3a3"/><circle cx="471.0" cy="421.0" r="3.2" fill="#efefef"/><circle cx="471.0" cy="421.0" r="2" fill="#a3a3a3"/><path d="M488.5 416.5l3-3h12v12l-3 3h-12z" fill="#e4e4e4" stroke="#333" stroke-width="1"/><path d="M488.5 416.5h12v12M500.5 416.5l3-3" fill="none" stroke="#333" stroke-width="1"/><g transform="translate(521,421.0) rotate(-45)" fill="none" stroke="#2a2a2a" stroke-width="2"><rect x="-8.5" y="-2.8" width="9.5" height="5.6" rx="2.8"/><rect x="-1" y="-2.8" width="9.5" height="5.6" rx="2.8"/></g></svg>

<!-- 3D model -->
<svg style="left:0;top:0" width="1366" height="768">
 <defs>
  <linearGradient id="bwR" x1="0" y1="0" x2="1" y2="0.6"><stop offset="0" stop-color="#aebbc0"/><stop offset=".35" stop-color="#c8d0d3"/><stop offset=".8" stop-color="#bfc8cb"/><stop offset="1" stop-color="#8d9ca2"/></linearGradient>
  <linearGradient id="bwL" x1="0" y1="0" x2="1" y2="0"><stop offset="0" stop-color="#a8b6bb"/><stop offset=".5" stop-color="#c2ccd0"/><stop offset="1" stop-color="#b9c4c8"/></linearGradient>
  <linearGradient id="lf" x1="0" y1="0" x2="0.2" y2="1"><stop offset="0" stop-color="#8c9ea4"/><stop offset=".35" stop-color="#95a9af"/><stop offset=".7" stop-color="#93a8ae"/><stop offset="1" stop-color="#8aa0a7"/></linearGradient>
  <linearGradient id="rfU" x1="0" y1="0" x2="1" y2="0"><stop offset="0" stop-color="#5b737c"/><stop offset="1" stop-color="#566f79"/></linearGradient><linearGradient id="rfL" x1="0" y1="0" x2="1" y2="1"><stop offset="0" stop-color="#4b6470"/><stop offset="1" stop-color="#5b6f79"/></linearGradient>
  <linearGradient id="shelfG" x1="0" y1="0" x2="1" y2="0"><stop offset="0" stop-color="#7e9ea5"/><stop offset=".6" stop-color="#71939a"/><stop offset="1" stop-color="#6a8d95"/></linearGradient>
 </defs>
 <!-- shadow -->
 <path d="M803 600L880 588" stroke="#cfcfcf" stroke-width="2.2"/>
 <!-- back inner walls -->
 <path d="M712 205L834 181.5V250L712 206Z" fill="url(#bwL)"/>
 <path d="M836 181.5L1004 246L883 267L836 250Z" fill="url(#bwR)"/>
 <!-- left front face -->
 <path d="M710 203L883 266V586L709 520Z" fill="url(#lf)"/>
 <!-- light floor seen through -->
 <path d="M719 520L769 511L883 551V584L716 523Z" fill="#b8c1c4"/>
 <path d="M720 524L883 584V586L709 520Z" fill="#aab4b7"/>
 <!-- darker zone between shelf and floor -->
 <path d="M719 487L883 547V551L769 511L719 520Z" fill="#8da2a8"/><path d="M719 520L769 511" stroke="#6f8389" stroke-width="1"/>
 <!-- shelf on left -->
 <path d="M719 480L834 459L883 477V540Z" fill="url(#shelfG)"/>
 <path d="M719 480L883 540V547L719 487Z" fill="#88a1a7"/>
 <path d="M719 480L883 540M719 487L883 547" stroke="#4e666d" stroke-width=".8"/>
 <path d="M745 494L782 508V514L745 500Z" fill="#b4c2c6" stroke="#5a6c72" stroke-width=".7"/>
 <!-- Cara_D plate -->
 <path d="M810 277Q801 280 801 291V463Q801 476 814 476L874 466Q881 464 881 456V274Q881 265 872 266Z" fill="#7f989f" stroke="#4c6066" stroke-width="1.4"/>
 <path d="M813 281Q805 284 805 293V461Q805 471 815 471L873 461Q878 460 878 454V276" fill="none" stroke="#a9bbc0" stroke-width="1.8"/>
 <path d="M815 283Q808 286 808 295V459Q808 468 816 468L872 458" fill="none" stroke="#647880" stroke-width=".8"/>
 <ellipse cx="842.5" cy="317.5" rx="24.5" ry="27" fill="#a0aeb2" stroke="#4c6066" stroke-width="1.4"/>
 <ellipse cx="842.5" cy="317.5" rx="21.5" ry="24" fill="#a6b3b7" stroke="#6a7e84" stroke-width="1"/>
 <ellipse cx="842.5" cy="427" rx="24.5" ry="27" fill="#a0aeb2" stroke="#4c6066" stroke-width="1.4"/>
 <ellipse cx="842.5" cy="427" rx="21.5" ry="24" fill="#a6b3b7" stroke="#6a7e84" stroke-width="1"/>
 <path d="M836 263V298h-4v10h4V404h-4v10h4V480" fill="none" stroke="#6a858c" stroke-width="2" opacity=".8"/>
 <!-- left edge thickness -->
 <path d="M709 203L717 206V523L709 520Z" fill="#b6c4c8"/>
 <path d="M709.5 203V520" stroke="#6f8187" stroke-width=".9"/><path d="M718 206V523" stroke="#5f777d" stroke-width="1.6"/>
 <path d="M712 264v66M712 394v66" stroke="#56686e" stroke-width="1"/><path d="M709 266h4M709 330h4M709 396h4M709 460h4" stroke="#56686e" stroke-width="1"/>
 <!-- top rim of left face (white) -->
 <path d="M710 203L883 266" stroke="#e4eaec" stroke-width="2.4"/>
 <path d="M712 206.5L881 268.5" stroke="#56696f" stroke-width=".8"/>
 <!-- back top rims -->
 <path d="M710 202L834 179L1006 245" fill="none" stroke="#1d2b30" stroke-width="1.6"/>
 <path d="M716 205L834 183L1001 247" fill="none" stroke="#2a3a40" stroke-width="1.1"/>
 <path d="M834 180V248M838 182V250" stroke="#24343a" stroke-width="1.4"/>
 <path d="M834 181h4v67h-4z" fill="#3d5056"/>
 <!-- right front face -->
 <path d="M883 266L1006 245V564L884 586Z" fill="url(#rfU)"/>
 
 <path d="M882 320Q884 329 896 329L999 311V375L900 391Q886 393 884 400Z" fill="#22424d"/>
 <path d="M886 400Q888 392 904 390L1000 374V520L884 540Z" fill="url(#rfL)"/>
 <path d="M898 330L998 312" fill="none" stroke="#b9c9cd" stroke-width="1.1"/><path d="M882 319Q883 328 895 329L998 311" fill="none" stroke="#162a31" stroke-width="1.3"/><path d="M884 401Q886 392 900 391L998 375" fill="none" stroke="#162a31" stroke-width="1.3"/>
 <!-- shelf under right face -->
 <path d="M884 532L996 529V540L884 548Z" fill="#3a5560"/>
 <path d="M884 474L996 521L884 532Z" fill="#2f5561"/>
 <path d="M884 532L996 521V529L884 540Z" fill="#2a4b56"/>
 <path d="M884 532L996 521" stroke="#5f8690" stroke-width="1"/>
 <path d="M884 540L996 529" stroke="#1f3a42" stroke-width="1"/>
 <path d="M884 474L996 521" stroke="#20383f" stroke-width="1"/>
 <!-- right lower floor -->
 <path d="M886 547L996 556L1003 558V563L884 585Z" fill="#a9b3b7"/>
 <path d="M886 547L996 556L1003 558" fill="none" stroke="#2e4850" stroke-width="1"/>
 <path d="M884 578L1003 556" stroke="#e8eeef" stroke-width="1.5"/>
 <!-- right edge + tabs -->
 <path d="M1001 246V563M1006 245V565" stroke="#1f3036" stroke-width="1.3"/>
 <path d="M1000 309h9v63h-9zM1000 434h9v66h-9z" fill="#e2e8ea" stroke="#324349" stroke-width="1"/>
 <path d="M1003 312v57M1003 437v60" stroke="#9aabb0" stroke-width="1"/>
 <!-- front corner edge -->
 <path d="M881.5 266V331M887 266V322M881.5 395V586M887 401V586" stroke="#1f3036" stroke-width="1.4"/>
 <path d="M883 265L1006 244" stroke="#1a2a30" stroke-width="1.6"/>
 <path d="M887 270L1001 249" stroke="#2d3f45" stroke-width="1"/>
 <path d="M876 331.5H888V395H876Z" fill="#22424d"/><path d="M876.5 331V395.5h5" fill="none" stroke="#a9bdc2" stroke-width="1.2"/><path d="M876 331.5h8" stroke="#a9bdc2" stroke-width="1"/>
 <!-- bottom edges -->
 <path d="M709 520L884 586L1005 564" fill="none" stroke="#26363c" stroke-width="1.6"/>
 <path d="M716 522L881 582" stroke="#66797f" stroke-width=".9"/>
 <!-- markers -->
<rect x="760" y="467" width="25" height="7.5" fill="#fafcfc"/><rect x="760" y="474.5" width="25" height="7" fill="#86c2c2"/><path d="M763 476v-4h5v4h5v-4h5v4h4" fill="none" stroke="#3f5a5f" stroke-width="1"/><rect x="814" y="525" width="25" height="7.5" fill="#fafcfc"/><rect x="814" y="532.5" width="25" height="7" fill="#86c2c2"/><path d="M817 534v-4h5v4h5v-4h5v4h4" fill="none" stroke="#3f5a5f" stroke-width="1"/><rect x="941" y="494" width="25" height="7.5" fill="#fafcfc"/><rect x="941" y="501.5" width="25" height="7" fill="#86c2c2"/><path d="M944 503v-4h5v4h5v-4h5v4h4" fill="none" stroke="#3f5a5f" stroke-width="1"/><rect x="930" y="533" width="25" height="7.5" fill="#fafcfc"/><rect x="930" y="540.5" width="25" height="7" fill="#86c2c2"/><path d="M933 542v-4h5v4h5v-4h5v4h4" fill="none" stroke="#3f5a5f" stroke-width="1"/><rect x="964" y="340.5" width="25" height="7.5" fill="#fafcfc"/><rect x="964" y="348.0" width="25" height="7" fill="#86c2c2"/><path d="M967 349.5v-4h5v4h5v-4h5v4h4" fill="none" stroke="#3f5a5f" stroke-width="1"/>
 <circle cx="946" cy="352" r="2.6" fill="none" stroke="#111" stroke-width="1.2"/>
 <g fill="none" stroke="#6d8087" stroke-width=".9"><circle cx="773" cy="287.5" r="3"/><circle cx="777" cy="287.5" r="3"/><circle cx="803" cy="281" r="3"/></g>
</svg>

<!-- viewcube -->
<svg style="left:0;top:0" width="1366" height="768">
 <defs><radialGradient id="vcs" cx=".5" cy=".5" r=".5"><stop offset="0" stop-color="#d0d0d0"/><stop offset="1" stop-color="#fff" stop-opacity="0"/></radialGradient></defs>
 <ellipse cx="1318" cy="210" rx="24" ry="6" fill="url(#vcs)"/>
 <path d="M1292.2 167.5L1318.5 164L1343.7 168.1L1312.1 172.2Z" fill="#f4f4f4"/>
 <path d="M1292.2 167.5L1312.1 172.2V211.4L1292.5 200.9Z" fill="#e9e9e9"/>
 <path d="M1312.1 172.2L1343.7 168.1L1343 203.8L1312 211.4Z" fill="#efefef"/>
 <g fill="none" stroke="#9a9a9a" stroke-width=".9" stroke-dasharray="2.5 1.2">
  <path d="M1292.2 167.5L1318.5 164L1343.7 168.1L1312.1 172.2Z"/>
  <path d="M1292.2 167.5V200.9L1312 211.4L1343 203.8V168.1M1312.1 172.2V211.4"/>
 </g>
 <text x="1301" y="193" font-family="Liberation Sans" font-size="7" fill="#8a8a8a" transform="rotate(12 1301 193)" text-anchor="middle">WAY</text>
 <text x="1328" y="192" font-family="Liberation Sans" font-size="8" fill="#8a8a8a" transform="rotate(-10 1328 192)" text-anchor="middle">BACK</text>
 <path d="M1322 163.5V158" stroke="#7b7bd0" stroke-width="1.5"/>
 <text x="1321.5" y="157" font-family="Liberation Sans" font-size="9" fill="#8c8cdc" text-anchor="middle">Z</text>
 <path d="M1291 201L1296 200" stroke="#e88a8a" stroke-width="1.3"/>
 <text x="1284" y="205" font-family="Liberation Sans" font-size="8" fill="#ee9a9a" text-anchor="middle">X</text>
 <path d="M1343 204l4 1.5" stroke="#8ad08a" stroke-width="1.3"/>
 <text x="1350" y="209" font-family="Liberation Sans" font-size="8" fill="#9ad89a" text-anchor="middle">Y</text>
</svg>
<!-- comments -->
<div class="a" style="left:406px;top:649px;width:300px;height:25px;background:#efefef;border:1px solid #d6d6d6"></div>
<div class="t" style="left:431px;top:656px;font-size:11px;color:#555;transform:scaleX(.88)">COMMENTS</div>
<svg style="left:0;top:0" width="1366" height="768">
 <circle cx="689.2" cy="661" r="4.8" fill="#222"/><path d="M686.5 661h5.4M689.2 658.3v5.4" stroke="#fff" stroke-width="1.5"/>
 <path d="M702.5 656.5v9" stroke="#777" stroke-width=".8"/><path d="M704.5 656.5v9" stroke="#bbb" stroke-width=".8"/>
</svg>
<!-- nav bar -->
<div class="a" style="left:765px;top:650px;width:237px;height:24px;background:#efefef"></div>
<svg style="left:0;top:0" width="1366" height="768">
 <g fill="#333">
  <path d="M789.3 660.5h5.5l-2.75 3.5z M901 660.5h5.5l-2.75 3.5z M932.5 660.5h5.5l-2.75 3.5z M963 660.5h5.5l-2.75 3.5z M993 660.5h5.5l-2.75 3.5z"/>
 </g>
 <!-- orbit -->
 <path d="M776 669.5V656M773.5 659l2.5-3.5l2.5 3.5" fill="none" stroke="#333" stroke-width="1.2"/>
 <path d="M774 660.5Q768 662 768.5 664.5Q770 667.5 777 667.5Q783 667 783.5 664.5Q783.5 662 779 661" fill="none" stroke="#333" stroke-width="1.4"/>
 <path d="M772 664.5l-3.5 3l3.5 2z" fill="#333"/>
 <!-- look at -->
 <rect x="801" y="659" width="15.5" height="10.5" fill="#fff" stroke="#333" stroke-width="1.2"/>
 <rect x="804" y="662" width="9.5" height="4.5" fill="#888"/>
 <path d="M803 658.5l3-3M808 658.5l5-4" stroke="#333" stroke-width="1.2"/>
 <!-- pan hand -->
 <path d="M830 669.5Q827 665 827 662.5Q828 661 830 663V656Q831.5 654.5 833 656V655Q834.5 653.5 836 655V656Q837.5 654.5 839 656V658Q840.5 657 842 658.5V664Q841 669 837.5 670.5Z" fill="#fff" stroke="#333" stroke-width="1.1"/>
 <path d="M833 656V662M836 655V662M839 657V662" stroke="#333" stroke-width=".9"/>
 <!-- zoom -->
 <circle cx="858.5" cy="662" r="5" fill="#e8f2f4" stroke="#333" stroke-width="1.4"/>
 <path d="M862 665.5l4.5 4.5" stroke="#333" stroke-width="2.4"/>
 <path d="M865 657.5h4M867 655.5v4M865 661h4" stroke="#333" stroke-width="1"/>
 <!-- fit -->
 <rect x="879" y="654" width="16" height="16" fill="none" stroke="#555" stroke-width="1" stroke-dasharray="2 1.5"/>
 <circle cx="886" cy="661" r="5.2" fill="#e8f2f4" stroke="#333" stroke-width="1.4"/>
 <path d="M889.5 664.5l5 5" stroke="#333" stroke-width="2.4"/>
 <!-- display -->
 <rect x="912.5" y="655" width="15" height="11" fill="#8fb3e8" stroke="#333" stroke-width="1.1"/>
 <rect x="914.5" y="657" width="11" height="7" fill="#a9c8f0"/>
 <path d="M917 668.5h6" stroke="#333" stroke-width="1.3"/>
 <!-- grid -->
 <rect x="943" y="654.5" width="15.5" height="15.5" fill="#fff" stroke="#555" stroke-width="1"/>
 <path d="M946 654.5v15.5M949 654.5v15.5M952 654.5v15.5M955 654.5v15.5M943 657.5h15.5M943 660.5h15.5M943 663.5h15.5M943 666.5h15.5" stroke="#666" stroke-width="1"/>
 <!-- viewports -->
 <rect x="974" y="655" width="14.5" height="13.5" fill="#333"/>
 <rect x="975.2" y="656.2" width="5.5" height="5" fill="#9bbbea"/><rect x="981.8" y="656.2" width="5.5" height="5" fill="#9bbbea"/>
 <rect x="975.2" y="662.3" width="5.5" height="5" fill="#9bbbea"/><rect x="981.8" y="662.3" width="5.5" height="5" fill="#9bbbea"/>
</svg>
<!-- timeline -->
<div id="tl" class="a"></div>
<svg style="left:0;top:0" width="1366" height="768">
 <g fill="#444">
  <rect x="413" y="697" width="2" height="13.5"/><path d="M425 697v13.5l-9-6.75z"/>
  <path d="M445.5 697v13.5l-9-6.75z"/><rect x="447.5" y="700.5" width="2" height="6.5"/>
  <path d="M463 697v13.5l10-6.75z"/>
  <rect x="486.5" y="700.5" width="2" height="6.5"/><path d="M490.5 697v13.5l9-6.75z"/>
  <path d="M513 697v13.5l9-6.75z"/><rect x="522.8" y="697" width="2" height="13.5"/>
 </g>
 <path d="M556.5 714.5v4h240v-4" fill="none" stroke="#c8c8c8" stroke-width="1.5"/>
 <g stroke="#c8c8c8" stroke-width="1.5"><path d="M556.5 714.5v4"/><path d="M580.5 714.5v4"/><path d="M604.5 714.5v4"/><path d="M628.5 714.5v4"/><path d="M652.5 714.5v4"/><path d="M676.5 714.5v4"/><path d="M700.5 714.5v4"/><path d="M724.5 714.5v4"/><path d="M748.5 714.5v4"/><path d="M772.5 714.5v4"/><path d="M796.5 714.5v4"/></g>
 <path d="M802.5 689h11l-4 5v0h-3l-4-5z" fill="#555"/>
 <rect x="806.2" y="692" width="2.2" height="29" fill="#555"/>
<path d="M548.5 699l3.5-3.5h12.5v12l-3.5 3.5h-12.5z" fill="#dcdcdc" stroke="#555" stroke-width="1"/><path d="M548.5 699h12.5v12M561.0 699l3.5-3.5" fill="none" stroke="#555" stroke-width="1"/><g transform="translate(555.0,703.5) rotate(-40)" fill="none" stroke="#777" stroke-width="1.3"><rect x="-5.5" y="-2" width="6.5" height="4" rx="2"/><rect x="-1" y="-2" width="6.5" height="4" rx="2"/></g><path d="M572.5 699l3.5-3.5h12.5v12l-3.5 3.5h-12.5z" fill="#dcdcdc" stroke="#555" stroke-width="1"/><path d="M572.5 699h12.5v12M585.0 699l3.5-3.5" fill="none" stroke="#555" stroke-width="1"/><g transform="translate(579.0,703.5) rotate(-40)" fill="none" stroke="#777" stroke-width="1.3"><rect x="-5.5" y="-2" width="6.5" height="4" rx="2"/><rect x="-1" y="-2" width="6.5" height="4" rx="2"/></g><g stroke="#555" stroke-width="1" fill="#d9d9d9" stroke-linejoin="round"><path d="M596.5 700l3.5-4.5h3.5v9l-2 1.5v4.5l-5 1.5z"/><path d="M612.0 699.5l-4-4v8.5l-3 1v5.5l7 1.5z"/></g><path d="M602.5 698v7M606.5 698v5" stroke="#3a6c94" stroke-width=".9"/><path d="M620.5 699l3.5-3.5h12.5v12l-3.5 3.5h-12.5z" fill="#dcdcdc" stroke="#555" stroke-width="1"/><path d="M620.5 699h12.5v12M633.0 699l3.5-3.5" fill="none" stroke="#555" stroke-width="1"/><g transform="translate(627.0,703.5) rotate(-40)" fill="none" stroke="#777" stroke-width="1.3"><rect x="-5.5" y="-2" width="6.5" height="4" rx="2"/><rect x="-1" y="-2" width="6.5" height="4" rx="2"/></g><g stroke="#555" stroke-width="1" fill="#d9d9d9" stroke-linejoin="round"><path d="M644.5 700l3.5-4.5h3.5v9l-2 1.5v4.5l-5 1.5z"/><path d="M660.0 699.5l-4-4v8.5l-3 1v5.5l7 1.5z"/></g><path d="M650.5 698v7M654.5 698v5" stroke="#3a6c94" stroke-width=".9"/><path d="M668.5 699l3.5-3.5h12.5v12l-3.5 3.5h-12.5z" fill="#dcdcdc" stroke="#555" stroke-width="1"/><path d="M668.5 699h12.5v12M681.0 699l3.5-3.5" fill="none" stroke="#555" stroke-width="1"/><g transform="translate(675.0,703.5) rotate(-40)" fill="none" stroke="#777" stroke-width="1.3"><rect x="-5.5" y="-2" width="6.5" height="4" rx="2"/><rect x="-1" y="-2" width="6.5" height="4" rx="2"/></g><g stroke="#555" stroke-width="1" fill="#d9d9d9" stroke-linejoin="round"><path d="M692.5 700l3.5-4.5h3.5v9l-2 1.5v4.5l-5 1.5z"/><path d="M708.0 699.5l-4-4v8.5l-3 1v5.5l7 1.5z"/></g><path d="M698.5 698v7M702.5 698v5" stroke="#3a6c94" stroke-width=".9"/><path d="M716.5 699l3.5-3.5h12.5v12l-3.5 3.5h-12.5z" fill="#dcdcdc" stroke="#555" stroke-width="1"/><path d="M716.5 699h12.5v12M729.0 699l3.5-3.5" fill="none" stroke="#555" stroke-width="1"/><g transform="translate(723.0,703.5) rotate(-40)" fill="none" stroke="#777" stroke-width="1.3"><rect x="-5.5" y="-2" width="6.5" height="4" rx="2"/><rect x="-1" y="-2" width="6.5" height="4" rx="2"/></g><g stroke="#555" stroke-width="1" fill="#d9d9d9" stroke-linejoin="round"><path d="M740.5 700l3.5-4.5h3.5v9l-2 1.5v4.5l-5 1.5z"/><path d="M756.0 699.5l-4-4v8.5l-3 1v5.5l7 1.5z"/></g><path d="M746.5 698v7M750.5 698v5" stroke="#3a6c94" stroke-width=".9"/><path d="M764.5 699l3.5-3.5h12.5v12l-3.5 3.5h-12.5z" fill="#dcdcdc" stroke="#555" stroke-width="1"/><path d="M764.5 699h12.5v12M777.0 699l3.5-3.5" fill="none" stroke="#555" stroke-width="1"/><g transform="translate(771.0,703.5) rotate(-40)" fill="none" stroke="#777" stroke-width="1.3"><rect x="-5.5" y="-2" width="6.5" height="4" rx="2"/><rect x="-1" y="-2" width="6.5" height="4" rx="2"/></g><g stroke="#555" stroke-width="1" fill="#d9d9d9" stroke-linejoin="round"><path d="M788.5 700l3.5-4.5h3.5v9l-2 1.5v4.5l-5 1.5z"/><path d="M804.0 699.5l-4-4v8.5l-3 1v5.5l7 1.5z"/></g><path d="M794.5 698v7M798.5 698v5" stroke="#3a6c94" stroke-width=".9"/>
 <g transform="translate(1345,703.5)"><circle r="4.6" fill="none" stroke="#9a9a9a" stroke-width="3"/><g fill="#9a9a9a"><rect x="-1.6" y="-8" width="3.2" height="3.5" transform="rotate(0)"/><rect x="-1.6" y="-8" width="3.2" height="3.5" transform="rotate(45)"/><rect x="-1.6" y="-8" width="3.2" height="3.5" transform="rotate(90)"/><rect x="-1.6" y="-8" width="3.2" height="3.5" transform="rotate(135)"/><rect x="-1.6" y="-8" width="3.2" height="3.5" transform="rotate(180)"/><rect x="-1.6" y="-8" width="3.2" height="3.5" transform="rotate(225)"/><rect x="-1.6" y="-8" width="3.2" height="3.5" transform="rotate(270)"/><rect x="-1.6" y="-8" width="3.2" height="3.5" transform="rotate(315)"/></g></g>
</svg>

<!-- taskbar -->
<div id="task" class="a"></div>
<div class="a" style="left:588px;top:728px;width:48px;height:40px;background:rgba(255,255,255,.16)"></div>
<svg style="left:0;top:0" width="1366" height="768">
 <g fill="#fff">
  <path d="M15.5 742.2l7.2-1v7.1h-7.2z M23.6 741l8.8-1.2v8.5h-8.8z M15.5 749.2h7.2v7.1l-7.2-1z M23.6 749.2h8.8v8.4l-8.8-1.2z"/>
 </g>
 <circle cx="74.5" cy="746" r="5.2" fill="none" stroke="#fff" stroke-width="1.3"/>
 <path d="M70.8 749.7l-6 6" stroke="#fff" stroke-width="1.5"/>
 <g fill="none" stroke="#fff" stroke-width="1.2">
  <rect x="113.5" y="743.5" width="10" height="8"/><path d="M111 741h15M111 754.5h15M127 742.5v2M127 746v2M127 749.5v2"/>
 </g>
 <!-- folder -->
 <path d="M160 742h8l2 2h12v12h-22z" fill="#e8b843"/>
 <rect x="160" y="745" width="22" height="11" fill="#f6d36a"/>
 <path d="M166 752h10v4h-3v-2h-4v2h-3z" fill="#4aa8d8"/>
 <!-- word -->
 <rect x="214" y="738" width="17" height="20" rx="1.5" fill="#2b7cd3"/><rect x="214" y="744" width="17" height="7" fill="#185abd"/><rect x="214" y="751" width="17" height="7" fill="#103f91"/>
 <rect x="208" y="742" width="13" height="12" rx="1" fill="#185abd"/>
 <text x="214.5" y="751.8" font-family="Liberation Sans" font-size="10" font-weight="bold" fill="#fff" text-anchor="middle">W</text>
 <!-- chrome -->
 <g transform="translate(269,748)">
  <circle r="11.5" fill="#db4437"/>
  <path d="M0 0L-10 5.75A11.5 11.5 0 0 1 0-11.5L10-5.75Z" fill="#db4437"/>
  <path d="M0 0L10-5.75A11.5 11.5 0 0 1 0 11.5L0 0" fill="#ffcd40"/>
  <path d="M0 0L0 11.5A11.5 11.5 0 0 1-9.96 -5.75L0 0" fill="#0f9d58"/>
  <path d="M0 0L-9.96-5.75A11.5 11.5 0 0 1 9.96-5.75Z" fill="#db4437"/>
  <circle r="5.2" fill="#fff"/><circle r="4.1" fill="#4285f4"/>
 </g>
 <g transform="translate(562.5,748)">
  <circle r="11.5" fill="#db4437"/>
  <path d="M0 0L10-5.75A11.5 11.5 0 0 1 0 11.5L0 0" fill="#ffcd40"/>
  <path d="M0 0L0 11.5A11.5 11.5 0 0 1-9.96 -5.75L0 0" fill="#0f9d58"/>
  <circle r="5.2" fill="#fff"/><circle r="4.1" fill="#4285f4"/>
 </g>
 <!-- ppt -->
 <circle cx="320" cy="748" r="11" fill="#ed6c47"/><path d="M320 737a11 11 0 0 1 11 11h-11z" fill="#ff8f6b"/>
 <rect x="305.5" y="742" width="13" height="12" rx="1" fill="#c43e1c"/>
 <text x="312" y="751.8" font-family="Liberation Sans" font-size="10" font-weight="bold" fill="#fff" text-anchor="middle">P</text>
 <!-- excel -->
 <rect x="361" y="738" width="18" height="20" rx="1.5" fill="#21a366"/><rect x="361" y="744.5" width="18" height="6.5" fill="#107c41"/><rect x="361" y="751" width="18" height="7" fill="#185c37"/>
 <path d="M370 738v20" stroke="#33c481" stroke-width=".5"/>
 <rect x="354" y="742" width="13" height="12" rx="1" fill="#107c41"/>
 <text x="360.5" y="751.8" font-family="Liberation Sans" font-size="10" font-weight="bold" fill="#fff" text-anchor="middle">X</text>
 <!-- discord -->
 <rect x="405" y="739" width="21.5" height="18" rx="4" fill="#7289da"/>
 <path d="M409 752q-1-6 2.5-9.5q2-.8 3.5-.8h1.5q1.5 0 3.5.8q3.5 3.5 2.5 9.5q-1.5 1.5-3.5 1.5l-1-1.5h-4.5l-1 1.5q-2 0-3.5-1.5z" fill="#fff"/>
 <circle cx="413.5" cy="748.5" r="1.4" fill="#7289da"/><circle cx="418" cy="748.5" r="1.4" fill="#7289da"/>
 <!-- zoom -->
 <rect x="453" y="737" width="23.5" height="22" rx="6" fill="#4a8cff"/>
 <rect x="457.5" y="743.5" width="10" height="8.5" rx="1.5" fill="#fff"/><path d="M468.5 746l4-2.5v8.5l-4-2.5z" fill="#fff"/>
 <!-- teams -->
 <circle cx="521" cy="741" r="3.3" fill="#7b83eb"/><rect x="514" y="745" width="14" height="11" rx="3" fill="#7b83eb"/>
 <circle cx="513" cy="740" r="3.5" fill="#5059c9"/><rect x="503" y="743" width="19" height="13" rx="2" fill="#5b5fc7"/>
 <rect x="500" y="743" width="12" height="11" rx="1" fill="#4b53bc"/>
 <text x="506" y="752" font-family="Liberation Sans" font-size="9.5" font-weight="bold" fill="#fff" text-anchor="middle">T</text>
 <circle cx="520.5" cy="755" r="5.5" fill="#92c353"/><path d="M517.5 755l2 2l3.5-3.5" fill="none" stroke="#fff" stroke-width="1.3"/>
 <!-- fusion -->
 <defs><linearGradient id="fg" x1="0" y1="0" x2="0" y2="1"><stop offset="0" stop-color="#d2772a"/><stop offset="1" stop-color="#a8642e"/></linearGradient></defs>
 <rect x="600" y="735.7" width="24.2" height="24.1" fill="#fbe9d8"/>
 <path d="M608 739.5h9v3.5h-5.5v3h5v3.5h-5v5h-3.5z" fill="url(#fg)"/>
 <!-- paint -->
 <path d="M650 752q0-9 12-11q9-1 11 5q1 4-3 6q-3 1-2.5 3q.5 2-2 3q-5 2-10 1q-5.5-1-5.5-7z" fill="#e6eef4" stroke="#b8c8d8" stroke-width=".6"/>
 <circle cx="653.5" cy="750" r="1.6" fill="#b04050"/><circle cx="657" cy="745.5" r="1.6" fill="#50b050"/><circle cx="659.5" cy="749.5" r="1.6" fill="#223"/>
 <path d="M660 758l11-17.5l2.2 1l-10.5 17.5z" fill="#d8c090"/>
 <path d="M668.5 739l3.5-2l2 3l-2.5 2z" fill="#e8c8a0"/>
 <!-- running indicators -->
 <rect x="494" y="766" width="39" height="2" fill="#a4a9b0"/>
 <rect x="543" y="766" width="39" height="2" fill="#a4a9b0"/>
 <rect x="588" y="766" width="48" height="2" fill="#b6bbc2"/>
 <rect x="641" y="766" width="41" height="2" fill="#a4a9b0"/>
 <!-- tray -->
 <g fill="none" stroke="#fff" stroke-width="1.1">
  <circle cx="1090" cy="743" r="2.8"/><path d="M1085 753q0-5 5-5q5 0 5 5"/>
  <circle cx="1083.5" cy="748" r="2.2"/><path d="M1079.5 755.5q0-4.5 4-4.5q4 0 4 4.5"/>
  <path d="M1117 751l6-5.5l6 5.5"/>
  <rect x="1140.5" y="744.5" width="13" height="8"/>
 </g>
 <rect x="1142.5" y="746.5" width="6" height="4" fill="#fff"/><rect x="1154" y="746.8" width="1.5" height="3.5" fill="#fff"/>
 <g fill="none" stroke="#fff" stroke-width="1.1">
  <path d="M1166 755a12 12 0 0 1 12-12"/><path d="M1169 755a9 9 0 0 1 9-9"/><path d="M1172 755a6 6 0 0 1 6-6" />
  <path d="M1187 746.5h3l4-4v13.5l-4-4h-3z"/><path d="M1197 746q2 2.5 0 5M1199.5 744q4 4.5 0 9M1202 742q5.5 6.5 0 13"/>
  <path d="M1325.5 740.5h15.5v11.5h-5.5l-2.5 3.5l-2.5-3.5h-5z"/>
 </g>
 <circle cx="1177" cy="754" r="1.5" fill="#fff"/>
 <rect x="1362" y="728" width="1" height="40" fill="#555"/>
</svg>
<div class="t" style="left:1215px;top:742.5px;font-size:12px;color:#fff;transform:scaleX(.78)">ESP</div>
<div class="t" style="left:1264px;top:733px;font-size:12px;color:#fff;transform:scaleX(.89)">16:29</div>
<div class="t" style="left:1249.5px;top:750.5px;font-size:12px;color:#fff;transform:scaleX(.94)">16/04/2021</div>
</body></html>
